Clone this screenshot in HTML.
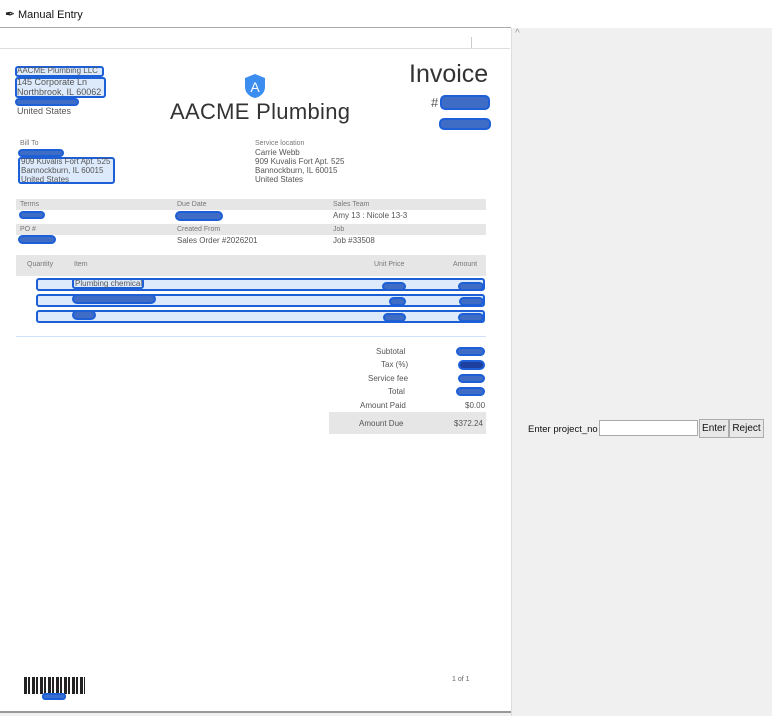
<!DOCTYPE html>
<html><head><meta charset="utf-8"><style>
*{margin:0;padding:0;box-sizing:border-box}
body{width:772px;height:716px;position:relative;background:#f0f0f0;font-family:"Liberation Sans",sans-serif;overflow:hidden;color:#555}
.a{position:absolute;white-space:nowrap}
.hb{position:absolute;border:2px solid #1c5fd6;border-radius:3px;background:rgba(120,170,240,.25)}
.pill{position:absolute;border:2px solid #1c5fd6;border-radius:5px;background:#3f6cc4}
.s{font-size:7px;color:#777}
.t{font-size:8px;color:#555}
.g{position:absolute;background:#e6e6e6}
</style></head><body>
<div class="a" style="left:0;top:0;width:772px;height:28px;background:#fff"></div>
<div class="a" style="left:5px;top:7px;font-size:12px;color:#222">&#x2712;</div>
<div class="a" style="left:18px;top:9px;font-size:11px;color:#111">Manual Entry</div>
<div class="a" style="left:0;top:27px;width:511px;height:1px;background:#aaa"></div>
<div class="a" style="left:0;top:28px;width:511px;height:684px;background:#fff"></div>
<div class="a" style="left:0;top:48px;width:510px;height:1px;background:#ddd"></div>
<div class="a" style="left:471px;top:37px;width:1px;height:11px;background:#ccc"></div>
<div class="a" style="left:511px;top:28px;width:1px;height:688px;background:#ddd"></div>
<div class="a" style="left:515px;top:28px;font-size:10px;color:#999">^</div>
<div class="a" style="left:0;top:711px;width:511px;height:2px;background:#999"></div>

<div class="hb" style="left:15px;top:66px;width:89px;height:11px"></div>
<div class="a t" style="left:17px;top:66px;font-size:8px">AACME Plumbing LLC</div>
<div class="hb" style="left:15px;top:77px;width:91px;height:21px"></div>
<div class="a t" style="left:17px;top:77px;font-size:9px;line-height:10px">145 Corporate Ln<br>Northbrook, IL 60062</div>
<div class="pill" style="left:15px;top:98px;width:64px;height:8px"></div>
<div class="a t" style="left:17px;top:106px;font-size:9px">United States</div>

<svg class="a" style="left:244px;top:73px" width="22" height="26" viewBox="0 0 22 26"><path d="M11 1L21 5V14C21 20 16 24 11 25C6 24 1 20 1 14V5Z" fill="#3b8df0"/><text x="11" y="19" font-size="14" fill="#fff" text-anchor="middle" font-family="Liberation Sans">A</text></svg>
<div class="a" style="left:170px;top:99px;font-size:22px;color:#333;letter-spacing:0.3px">AACME Plumbing</div>
<div class="a" style="left:409px;top:60px;font-size:25px;color:#333">Invoice</div>
<div class="a" style="left:431px;top:95px;font-size:13px;color:#555">#</div>
<div class="pill" style="left:440px;top:95px;width:50px;height:15px"></div>
<div class="pill" style="left:439px;top:118px;width:52px;height:12px"></div>

<div class="a s" style="left:20px;top:140px">Bill To</div>
<div class="pill" style="left:18px;top:149px;width:46px;height:8px"></div>
<div class="hb" style="left:18px;top:157px;width:97px;height:27px"></div>
<div class="a t" style="left:21px;top:157px;line-height:9px">909 Kuvalis Fort Apt. 525<br>Bannockburn, IL 60015<br>United States</div>
<div class="a s" style="left:255px;top:140px">Service location</div>
<div class="a t" style="left:255px;top:148px;line-height:9px">Carrie Webb<br>909 Kuvalis Fort Apt. 525<br>Bannockburn, IL 60015<br>United States</div>

<div class="g" style="left:16px;top:199px;width:470px;height:11px"></div>
<div class="g" style="left:16px;top:224px;width:470px;height:11px"></div>
<div class="a s" style="left:20px;top:201px">Terms</div>
<div class="a s" style="left:177px;top:201px">Due Date</div>
<div class="a s" style="left:333px;top:201px">Sales Team</div>
<div class="pill" style="left:19px;top:211px;width:26px;height:8px"></div>
<div class="pill" style="left:175px;top:211px;width:48px;height:10px"></div>
<div class="a t" style="left:333px;top:211px">Amy 13 : Nicole 13-3</div>
<div class="a s" style="left:20px;top:226px">PO #</div>
<div class="a s" style="left:177px;top:226px">Created From</div>
<div class="a s" style="left:333px;top:226px">Job</div>
<div class="pill" style="left:18px;top:235px;width:38px;height:9px"></div>
<div class="a t" style="left:177px;top:236px">Sales Order #2026201</div>
<div class="a t" style="left:333px;top:236px">Job #33508</div>

<div class="g" style="left:16px;top:255px;width:470px;height:21px"></div>
<div class="a s" style="left:27px;top:261px">Quantity</div>
<div class="a s" style="left:74px;top:261px">Item</div>
<div class="a s" style="left:374px;top:261px">Unit Price</div>
<div class="a s" style="left:453px;top:261px">Amount</div>

<div class="hb" style="left:36px;top:278px;width:449px;height:13px"></div>
<div class="hb" style="left:72px;top:278px;width:72px;height:11px;background:none"></div>
<div class="a t" style="left:75px;top:279px">Plumbing chemical</div>
<div class="pill" style="left:382px;top:282px;width:24px;height:9px"></div>
<div class="pill" style="left:458px;top:282px;width:26px;height:9px"></div>
<div class="hb" style="left:36px;top:294px;width:449px;height:13px"></div>
<div class="pill" style="left:72px;top:294px;width:84px;height:10px"></div>
<div class="pill" style="left:389px;top:297px;width:17px;height:9px"></div>
<div class="pill" style="left:459px;top:297px;width:25px;height:9px"></div>
<div class="hb" style="left:36px;top:310px;width:449px;height:13px"></div>
<div class="pill" style="left:72px;top:310px;width:24px;height:10px"></div>
<div class="pill" style="left:383px;top:313px;width:23px;height:9px"></div>
<div class="pill" style="left:458px;top:313px;width:26px;height:9px"></div>

<div class="a" style="left:16px;top:336px;width:470px;height:1px;background:#cfe0fb"></div>

<div class="a t" style="left:376px;top:347px">Subtotal</div>
<div class="a t" style="left:381px;top:360px">Tax (%)</div>
<div class="a t" style="left:368px;top:374px">Service fee</div>
<div class="a t" style="left:388px;top:387px">Total</div>
<div class="a t" style="left:360px;top:401px">Amount Paid</div>
<div class="a t" style="left:465px;top:401px">$0.00</div>
<div class="pill" style="left:456px;top:347px;width:29px;height:9px"></div>
<div class="pill" style="left:458px;top:360px;width:27px;height:10px;background:#1e3f9e"></div>
<div class="pill" style="left:458px;top:374px;width:27px;height:9px"></div>
<div class="pill" style="left:456px;top:387px;width:29px;height:9px"></div>
<div class="g" style="left:329px;top:412px;width:157px;height:22px"></div>
<div class="a t" style="left:359px;top:419px">Amount Due</div>
<div class="a t" style="left:454px;top:419px">$372.24</div>

<div class="a" style="left:24px;top:677px;width:61px;height:17px;background:repeating-linear-gradient(90deg,#222 0 3px,#fff 3px 4px,#222 4px 6px,#fff 6px 8px)"></div>
<div class="pill" style="left:42px;top:693px;width:24px;height:7px;border-radius:3px;background:#3a6fd0"></div>
<div class="a" style="left:452px;top:676px;font-size:7px;color:#666">1 of 1</div>

<div class="a" style="left:528px;top:424px;font-size:9.5px;color:#111">Enter project_no</div>
<div class="a" style="left:599px;top:420px;width:99px;height:16px;background:#fff;border:1px solid #aaa"></div>
<div class="a" style="left:699px;top:419px;width:30px;height:19px;border:1px solid #adadad;background:#e8e8e8;font-size:10px;color:#111;text-align:center;line-height:17px">Enter</div>
<div class="a" style="left:729px;top:419px;width:35px;height:19px;border:1px solid #adadad;background:#e8e8e8;font-size:10px;color:#111;text-align:center;line-height:17px">Reject</div>
</body></html>
